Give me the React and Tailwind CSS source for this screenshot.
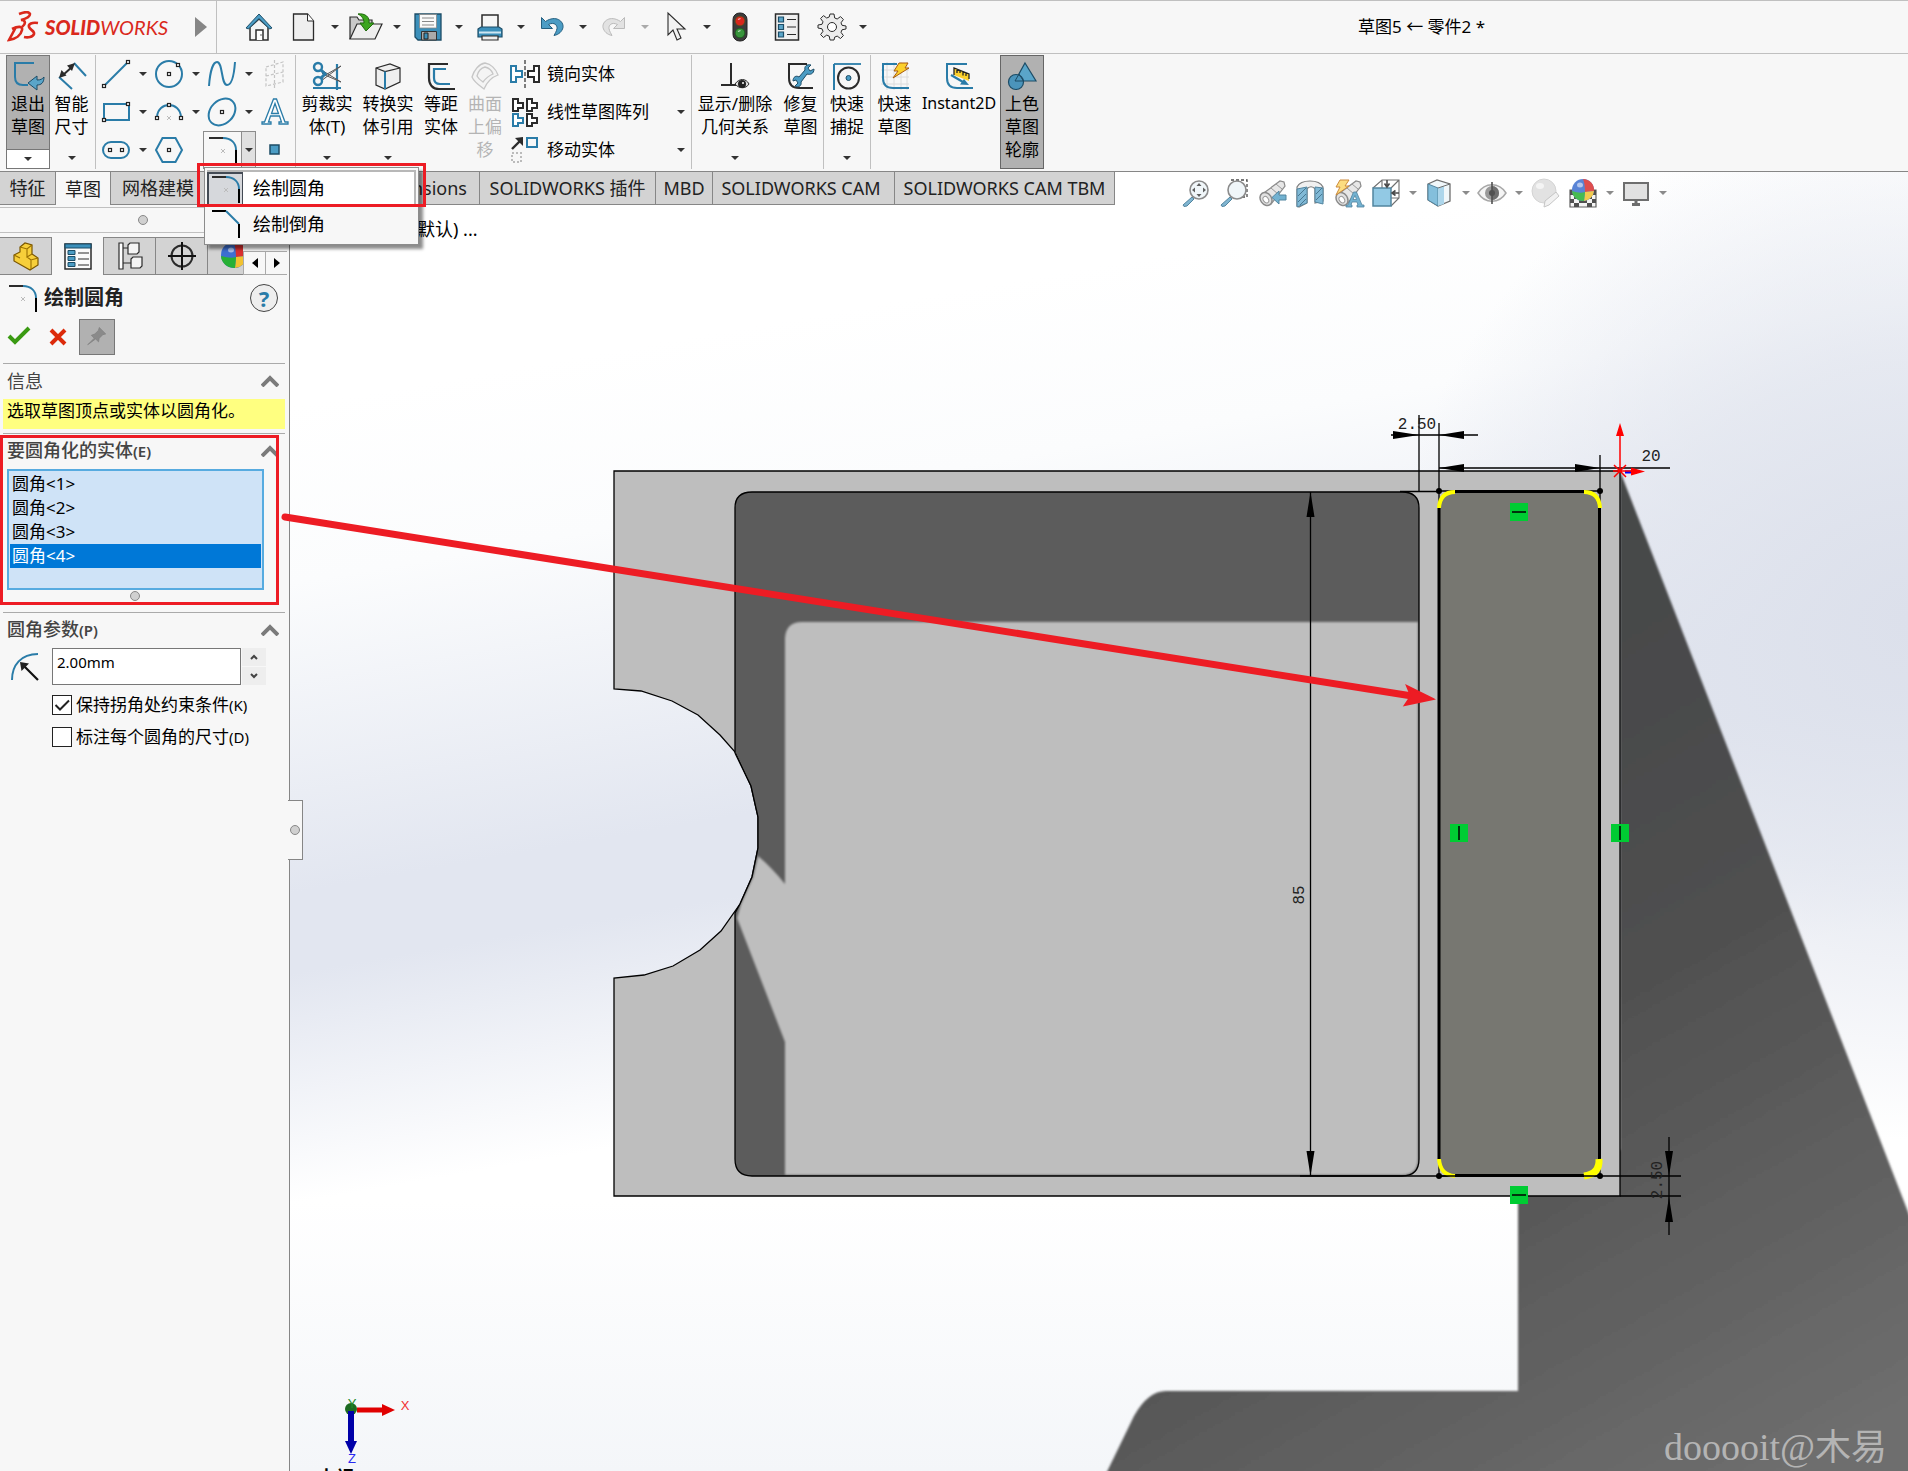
const BLUE = '#2a7ca8'
const DARK = '#2b2b2b'

function Icon({ children, className = 'w-7 h-7' }) {
  return (
    <svg className={`${className} shrink-0 overflow-visible`} viewBox="0 0 28 28" fill="none" stroke={DARK} strokeWidth="1.5" aria-hidden="true">
      {children}
    </svg>
  )
}

function Caret({ className = 'text-[#333]' }) {
  return (
    <svg className={`w-2 h-1 shrink-0 ${className}`} viewBox="0 0 8 4" fill="currentColor" aria-hidden="true">
      <path d="M0 0h8L4 4z" />
    </svg>
  )
}

function Handle({ x, y }) {
  return <rect x={x - 1.5} y={y - 1.5} width="3" height="3" fill="#fff" stroke="#222" strokeWidth="1.2" />
}

const mag = (
  <>
    <path d="M10 18l-9 8 1 1.500 3-.5 7-7z" fill="#6aa9c9" stroke="#35708f" strokeWidth="1" />
    <circle cx="17" cy="11" r="9" fill="#eef5f9" stroke="#777" strokeWidth="1.6" />
  </>
)

const telescope = (
  <>
    <path d="M3 16L22 2l4 1 1 4-14 18z" fill="#e3e3e3" stroke="#777" strokeWidth="1.200" />
    <path d="M13 9l7 6M18 5l6 5" stroke="#888" strokeWidth="1" />
    <ellipse cx="8" cy="20" rx="5.500" ry="7" transform="rotate(-35 8 20)" fill="#ddd" stroke="#777" />
    <ellipse cx="7.500" cy="20.500" rx="2.500" ry="3.500" transform="rotate(-35 8 20)" fill="#fff" stroke="#888" strokeWidth="1" />
  </>
)

const colourBall = (cx, cy, r) => (
  <g stroke="none">
    <circle cx={cx} cy={cy} r={r} fill="#3d6fd0" />
    <path d={`M${cx} ${cy - r}A${r} ${r} 0 0 1 ${cx + r} ${cy + 1}L${cx + 2} ${cy + 2}Q${cx + 2} ${cy - 6} ${cx} ${cy - r}z`} fill="#d93030" />
    <path d={`M${cx + 2} ${cy + 2}L${cx + r} ${cy + 1}A${r} ${r} 0 0 1 ${cx + 1} ${cy + r}z`} fill="#f2c230" />
    <path d={`M${cx - r} ${cy + 1}Q${cx - 3} ${cy + 4} ${cx + 2} ${cy + 2}L${cx + 1} ${cy + r}A${r} ${r} 0 0 1 ${cx - r} ${cy + 1}z`} fill="#27b035" />
    <ellipse cx={cx - 3} cy={cy - 5} rx="3" ry="2.500" fill="#fff" opacity=".55" />
  </g>
)

const profile = (x, y, colour) => (
  <path d="M0 0h5v4h5v5H5v3H0z" transform={`translate(${x} ${y})`} fill="#fff" stroke={colour} strokeWidth="2" />
)

const icons = {
  home: (
    <>
      <path d="M5 14v13h18V14L14 6z" fill="#f4f4f4" />
      <path d="M11 27V17h7v10" fill="#fff" />
      <path d="M15.500 22h1" />
      <path d="M1 15L14 1l13 14-2.500 1L14 5.500 3.500 16z" fill="#4b9cc4" stroke="#1f4f69" strokeWidth="1" />
    </>
  ),
  doc: (
    <>
      <path d="M3.500 1h14l6 7v19h-20z" fill="#efefef" strokeWidth="1.300" />
      <path d="M17.500 1v7h6" fill="#fff" strokeWidth="1" />
    </>
  ),
  open: (
    <>
      <path d="M-2 26V4h7l2 3h13v5" fill="#c9c9c9" strokeWidth="1.200" />
      <path d="M-2 26l7-15h25l-7 15z" fill="#eee" strokeWidth="1.200" />
      <path d="M6 1c7-1 12 3 11 9h5l-8 8-6-8h4c0-4-2-7-6-9z" fill="#3ba51e" stroke="#1f6a0c" strokeWidth="1" />
    </>
  ),
  save: (
    <>
      <path d="M1 1h26v26H4l-3-3z" fill="#3b8fba" stroke="#1c4c66" strokeWidth="1.300" />
      <path d="M5.500 1.500h17V15h-17z" fill="#fafafa" stroke="#888" strokeWidth=".8" />
      <path d="M8 5h12M8 8.500h12M8 12h12" stroke="#888" strokeWidth="1" />
      <path d="M7.500 18.500h15V27h-15z" fill="#aaa" stroke="#333" strokeWidth="1" />
      <path d="M10 20h4v6h-4z" fill="#3b8fba" stroke="#222" strokeWidth="1" />
    </>
  ),
  print: (
    <>
      <path d="M6 2h16v14H6z" fill="#f5f5f5" />
      <path d="M2 16l3-2h18l3 2v8H2z" fill="#3b8fba" stroke="#1c4c66" strokeWidth="1.200" />
      <path d="M3 19.500h22" stroke="#cfe6f2" strokeWidth="2" />
      <path d="M6 23h16v4H6z" fill="#eee" strokeWidth="1.200" />
    </>
  ),
  undo: <path d="M3.500 4.500v11h11l-4-4c6-3 9 1 8.500 4-.5 3-2 5-3 7 5-1 8-4 9-8 1-6-7-13-17.500-6z" fill="#4b9cc4" stroke="#245f80" strokeWidth="1" />,
  redo: <path d="M24.500 4.500v11h-11l4-4c-6-3-9 1-8.500 4 .5 3 2 5 3 7-5-1-8-4-9-8-1-6 7-13 17.500-6z" fill="#e2e2e2" stroke="#bbb" strokeWidth="1" />,
  cursor: <path d="M6 0v22l5-5 4 10 4-2-4-9h8z" fill="#f2f2f2" strokeWidth="1.100" />,
  traffic: (
    <>
      <rect x="7" y="0" width="14" height="28" rx="6.500" fill="#3c3c3c" stroke="#222" strokeWidth="1" />
      <circle cx="14" cy="8" r="4.800" fill="#d8271d" stroke="#551" strokeWidth=".6" />
      <circle cx="14" cy="20" r="4.800" fill="#38943c" stroke="#151" strokeWidth=".6" />
      <path d="M12 6.500l2.500-1M12 18.500l2.500-1" stroke="#fff" strokeWidth="1.200" opacity=".7" />
    </>
  ),
  list: (
    <>
      <path d="M2.500 1h23v26h-23z" fill="#f0f0f0" />
      <path d="M5.500 4h5v5h-5zM5.500 11.500h5v5h-5zM5.500 19h5v5h-5z" fill="#5aa5c9" stroke="#1c4c66" strokeWidth="1.200" />
      <path d="M14 6.500h9M14 14h9M14 21.500h9" strokeWidth="1.200" />
    </>
  ),
  gear: (
    <>
      <path
        d="M12 1h4l.7 4 2.500 1 3.300-2.400 2.900 2.900L23 9.800l1 2.500 4 .7v3l-4 .8-1 2.500 2.400 3.300-2.900 2.900-3.300-2.400-2.500 1L16 27h-4l-.8-3.900-2.500-1-3.200 2.400-2.900-2.900L5 18.300l-1-2.500L0 15v-3l4-.7 1-2.500-2.400-3.300 2.900-2.900L8.700 5l2.500-1z"
        fill="#ececec"
        strokeWidth="1"
      />
      <circle cx="14" cy="14" r="4.500" fill="#fff" strokeWidth="1" />
    </>
  ),
  exit: (
    <>
      <path d="M20 1H1v14c0 5 3 8 8 8h5" stroke={BLUE} strokeWidth="2" />
      <path d="M30 15c0 6-3 8-7 8v5l-9-7 9-7v4c4 0 5-1 7-3z" fill="#5aa5c9" stroke="#1c4c66" strokeWidth="1" />
    </>
  ),
  smart: (
    <>
      <path d="M16 1l12 13M1 15l13 12" stroke={BLUE} strokeWidth="2" />
      <path d="M5 13L14 5" strokeWidth="2" />
      <path d="M1 16l2.500-8 5 5.500zM17 1l-8 2.500 5 5.500z" fill={DARK} stroke="none" />
    </>
  ),
  line: (
    <>
      <path d="M2 26L26 2" stroke={BLUE} strokeWidth="2" />
      <Handle x={2} y={26} />
      <Handle x={26} y={2} />
    </>
  ),
  circle: (
    <>
      <circle cx="14" cy="14" r="13" stroke={BLUE} strokeWidth="2" />
      <Handle x={14} y={14} />
      <Handle x={23} y={5} />
    </>
  ),
  spline: <path d="M1 26C2 12 5 2 9 2c6 0 4 23 10 23 5 0 7-9 8-23" stroke={BLUE} strokeWidth="2" />,
  plane: <path d="M5 7l17-5v20L5 26zM5 16l17-4M13.500 0v28" stroke="#c4c4c4" strokeWidth="1.200" strokeDasharray="3 2" />,
  rect: (
    <>
      <path d="M2 6h25v16H2z" stroke={BLUE} strokeWidth="2" />
      <Handle x={26} y={6} />
      <Handle x={2} y={22} />
    </>
  ),
  arc: (
    <>
      <path d="M2 19C3 3 25 3 26 19" stroke={BLUE} strokeWidth="2" />
      <path d="M12 18l4 4m0-4l-4 4" stroke="#bbb" strokeWidth="1" />
      <Handle x={14} y={7} />
      <Handle x={2} y={20} />
      <Handle x={26} y={20} />
    </>
  ),
  ellipse: (
    <>
      <ellipse cx="14" cy="14" rx="15" ry="11.500" transform="rotate(-45 14 14)" stroke={BLUE} strokeWidth="2" />
      <Handle x={14} y={14} />
    </>
  ),
  text: (
    <path
      d="M1 26v-2h2.500L12.500 1h3l8.500 23h3v2h-9v-2h2.500l-2-6H9.500l-2 6H10v2zM10.500 15.500h7L14 5.500z"
      fill="#fff"
      stroke={BLUE}
      strokeWidth="1.300"
    />
  ),
  slot: (
    <>
      <rect x="1" y="6" width="26" height="16" rx="8" stroke={BLUE} strokeWidth="2" />
      <Handle x={8} y={14} />
      <Handle x={20} y={14} />
    </>
  ),
  hexagon: (
    <>
      <path d="M7.500 2h13L27 14l-6.500 12h-13L1 14z" stroke={BLUE} strokeWidth="2" />
      <Handle x={14} y={14} />
    </>
  ),
  fillet: (
    <>
      <path d="M0 2h14" strokeWidth="2" />
      <path d="M14 2c8 0 13 5 13 12" stroke={BLUE} strokeWidth="2" />
      <path d="M27 14v14" stroke="#000" strokeWidth="2" />
      <path d="M12 13l4 4m0-4l-4 4" stroke="#bbb" strokeWidth="1" />
    </>
  ),
  chamfer: (
    <>
      <path d="M0 1h14" stroke="#000" strokeWidth="2" />
      <path d="M14 1l13 13" stroke={BLUE} strokeWidth="2" />
      <path d="M27 14v14" stroke="#000" strokeWidth="2" />
    </>
  ),
  point: <path d="M9 9h9v9H9z" fill="#4b9cc4" stroke="#1c4c66" />,
  trim: (
    <>
      <path d="M24 2v26M0 26h28" stroke={BLUE} strokeWidth="2.200" />
      <path d="M28 4L9 15l1 2.500zM28 20L10 9l-.5 3z" fill="#eee" stroke="#555" strokeWidth="1" />
      <circle cx="5" cy="5" r="4" stroke={BLUE} strokeWidth="2.400" />
      <circle cx="5" cy="19" r="4" stroke={BLUE} strokeWidth="2.400" />
      <path d="M8 8l4 4-4 4" stroke={BLUE} strokeWidth="3" />
    </>
  ),
  convert: (
    <>
      <path d="M2 6l14-4 10 4v14l-15 7-9-4z" fill="#efefef" strokeWidth="1.200" />
      <path d="M2 6l9 3.500L26 6" strokeWidth="1.200" />
      <path d="M11 9.500V27" stroke={BLUE} strokeWidth="2" />
    </>
  ),
  offset: (
    <>
      <path d="M21 2H2v14c0 7 4 11 10 11h16" strokeWidth="2.200" />
      <path d="M19 7H7v9c0 4 2 6 6 6h10" stroke={BLUE} strokeWidth="2.200" />
    </>
  ),
  surface: (
    <>
      <path d="M13 27C9 24 3 20 1 15 3 8 8 2 14 1c6 1 11 6 13 12-6 2-11 7-14 14z" stroke="#c6c6c6" fill="#f4f4f4" strokeWidth="1.300" />
      <path d="M12 20c-3-2-5-4-6-6 1-4 4-8 8-9 4 1 7 4 8 7-5 2-7 4-10 8z" stroke="#c6c6c6" strokeWidth="1.300" />
    </>
  ),
  mirror: (
    <>
      <path d="M0 6h5v5h6v6H5v5H0z" fill="#fff" stroke={BLUE} strokeWidth="2" />
      <path d="M28 6h-5v5h-6v6h6v5h5z" fill="#fff" strokeWidth="2" />
      <path d="M14 0v28" strokeDasharray="4 2" strokeWidth="1.200" />
    </>
  ),
  pattern: (
    <>
      {profile(2, 1, DARK)}
      {profile(16, 1, DARK)}
      {profile(2, 16, BLUE)}
      {profile(16, 16, DARK)}
    </>
  ),
  move: (
    <>
      <path d="M1 13L9 5" strokeWidth="2.400" />
      <path d="M12 1v9L4 2z" fill={DARK} stroke="none" />
      <path d="M16 2h10v9H16z" stroke={BLUE} strokeWidth="2" />
      <path d="M1 17h9v9H1z" stroke="#bbb" strokeWidth="2" strokeDasharray="2 2" />
    </>
  ),
  relations: (
    <>
      <path d="M10 1v22M0 23h18" strokeWidth="2" />
      <path d="M14 22c4-6 11-6 14 0-3 5-10 5-14 0z" fill="#ddd" strokeWidth="1" />
      <circle cx="21" cy="22" r="4" fill="#222" stroke="none" />
      <circle cx="22" cy="21" r="1" fill="#fff" stroke="none" />
    </>
  ),
  repair: (
    <>
      <path d="M20 2H2v14c0 7 4 10 10 10h14" strokeWidth="2" />
      <path d="M27 7c0 5-4 6-7 5l-6 8c1 4-3 6-6 4l3-3-2-3-3 1c0-4 3-6 6-4l6-7c-1-4 2-6 6-5l-3 3 2 3z" fill="#4b9cc4" stroke="#1c4c66" strokeWidth="1" />
    </>
  ),
  snap: (
    <>
      <path d="M1 28V2" stroke={BLUE} strokeWidth="2" />
      <path d="M1 2h27" strokeWidth="1.800" stroke={BLUE} />
      <circle cx="15.500" cy="16" r="10.500" strokeWidth="2" />
      <circle cx="15.500" cy="16" r="2.500" fill="#4b9cc4" stroke="#1c4c66" strokeWidth="1" />
    </>
  ),
  rapid: (
    <>
      <path d="M0 8h28M0 15h28M0 22h28M6 0v28M13 0v28M20 0v28M26 0v28" stroke="#dcdcdc" strokeWidth="1" />
      <path d="M16 2H2v14c0 7 4 10 10 10h16" stroke={BLUE} strokeWidth="2" />
      <path d="M18 1h9l-3 5h4L12 16l5-7h-4z" fill="#fcd02c" stroke="#a85a10" strokeWidth="1" />
    </>
  ),
  instant: (
    <>
      <path d="M22 2H2v14c0 7 4 10 10 10h16" stroke={BLUE} strokeWidth="2" />
      <path d="M9 6l15 6v7L9 13z" fill="#fcd02c" stroke="none" />
      <path d="M9 13V6l15 6v5M12 7v4M15 8v3M18 9.500v4M21 11v3" stroke="#222" strokeWidth="1.300" />
      <path d="M6 13l12 7" stroke={BLUE} strokeWidth="2.200" />
      <path d="M24 23l-9-.5 4-5.500z" fill={BLUE} stroke="none" />
    </>
  ),
  shaded: (
    <>
      <path d="M17 1l11 18H7z" fill="#5aa5c9" stroke="#1c4c66" strokeWidth="1.200" />
      <circle cx="8" cy="20" r="7.500" fill="#4b94bb" stroke="#1c4c66" strokeWidth="1.200" />
      <path d="M7 19h8.500L11 12z" fill="none" stroke="#1c4c66" strokeWidth="1" />
    </>
  ),
  part: (
    <>
      <path d="M2 13l6-3V5l5-4 7 2v9l6 4v7l-8 5-16-9z" fill="#f7cf3a" stroke="#7a5600" strokeWidth="1.200" />
      <path d="M8 5l7 2 5-4M15 7v8l5-3M15 15l4 3 7-2M19 18v9M2 13l6 3" stroke="#9a7000" strokeWidth="1.100" />
    </>
  ),
  props: (
    <>
      <path d="M1 2h26v25H1z" fill="#fafafa" />
      <path d="M1 2h26v4H1z" fill="#3b8fba" stroke="#1c4c66" strokeWidth="1.200" />
      <path d="M4 8.500h7v4H4zM4 14.500h7v4H4zM4 20.500h7v4H4z" fill="#4b9cc4" stroke="#1c4c66" strokeWidth="1" />
      <path d="M14 11h11M14 17h11M14 23h11" strokeWidth="1.200" />
    </>
  ),
  config: (
    <>
      <path d="M3 1h4v26H3zM7 6h8M7 21h8" fill="#fff" strokeWidth="1.200" />
      <path d="M12 3l2-2h9v9l-2 2h-9zM15 17l2-2h9v9l-2 2h-9z" fill="#f4f4f4" strokeWidth="1.200" />
    </>
  ),
  target: (
    <>
      <circle cx="14" cy="14" r="10.500" strokeWidth="2" />
      <path d="M14 0v28M0 14h28" stroke="#111" strokeWidth="2" />
    </>
  ),
  ball: colourBall(14, 13, 13),
  zoomFit: (
    <>
      {mag}
      <path d="M17 4l2.500 3h-5zM17 18l2.500-3h-5zM10 11l3-2.500v5zM24 11l-3-2.500v5z" fill="#444" stroke="none" />
    </>
  ),
  zoomArea: (
    <>
      <path d="M11 1h16v17h-6" strokeDasharray="3 2" strokeWidth="1.300" />
      {mag}
    </>
  ),
  prevView: (
    <>
      {telescope}
      <path d="M28 16h-7v-4l-7 6.500 7 6.500v-4h7z" fill="#5aa5c9" stroke="#35708f" strokeWidth="1" />
    </>
  ),
  section: (
    <>
      <path d="M1 8c4-8 22-8 26 0v14l-8 2V10c-2-3-6-3-8 0v14l-8 4-2-1z" fill="#eee" stroke="#666" strokeWidth="1.200" />
      <path d="M1 10l10-2v16l-10 4zM19 8l8 1v16l-8-2z" fill="#6aadd0" stroke="#35708f" strokeWidth="1" />
      <path d="M2 17l8-8M2 23l8-8M4 26l6-6M20 15l6-6M20 21l6-6" stroke="#28607f" strokeWidth="1" />
    </>
  ),
  annotate: (
    <>
      {telescope}
      <path d="M6 1h9l-4 6h4L2 16l4-8H2z" fill="#fcd86a" stroke="#c4761a" strokeWidth="1" />
      <path d="M12 28v-2h2l5.500-13h3L28 26h2v2h-7v-2h1l-1-3h-5l-1 3h1v2zM19 20.500h3.500L21 16.500z" fill="#5aa5c9" stroke="#35708f" strokeWidth=".8" />
    </>
  ),
  orient: (
    <>
      <path d="M1 9l9-8h17v18l-8 8M19 9l8-8M10 1v8M19 19h8" strokeWidth="1.100" stroke="#555" />
      <path d="M1 9h18v18H1z" fill="#7fc0e0" stroke="#35708f" />
      <path d="M15 1v6m-2.500-2.500L15 8l2.500-3.500M27 14h-6m2.500-2.500L20 14l3.500 2.500" strokeWidth="1.600" />
    </>
  ),
  display: (
    <>
      <path d="M3 5l9-4 13 4v17l-12 5-10-6z" fill="#eef6fa" stroke="#555" strokeWidth="1.300" />
      <path d="M3 5l10 4v18L3 21z" fill="#6fb4d6" stroke="#35708f" strokeWidth="1" />
      <path d="M13 9l6-2v18l-6 2z" fill="#9fd0e8" stroke="none" />
      <path d="M13 9l12-4" stroke="#555" strokeWidth="1" />
    </>
  ),
  eye: (
    <>
      <path d="M0 14C7 3 21 3 28 14 21 25 7 25 0 14z" fill="#f4f4f4" stroke="#999" />
      <circle cx="14" cy="14" r="7" fill="#888" stroke="none" />
      <path d="M14 7a7 7 0 0 1 0 14z" fill="#555" stroke="none" />
      <circle cx="14" cy="14" r="3" fill="#333" stroke="none" />
      <path d="M14 3v22" stroke="#333" strokeWidth="1.600" />
    </>
  ),
  appearance: (
    <>
      <circle cx="13" cy="12" r="12" fill="#dedede" stroke="#ccc" strokeWidth="1" />
      <ellipse cx="9" cy="7" rx="4" ry="3" fill="#f3f3f3" stroke="none" />
      <path d="M13 28l1-6 11-9 3 4-10 9z" fill="#efefef" stroke="#bbb" strokeWidth="1" />
    </>
  ),
  scene: (
    <>
      <path d="M1 11h26v17H1z" fill="#f4f4f4" stroke="#444" strokeWidth="1.200" />
      <path d="M1 11h4v5H1zM23 11h4v5h-4zM5 16h5v4H5zM18 16h5v4h-5zM1 20h4v4H1zM10 20h8v4h-8zM23 20h4v4h-4zM5 24h5v4H5zM18 24h5v4h-5z" fill="#333" stroke="none" />
      {colourBall(14, 11, 11)}
    </>
  ),
  monitor: (
    <>
      <path d="M2 4h24v17H2z" fill="#ddd" stroke="#555" strokeWidth="2" />
      <path d="M10 25.500h8M14 21v4" stroke="#555" strokeWidth="3" />
    </>
  ),
  radius: (
    <>
      <path d="M1 27C1 12 10 1 27 1" stroke={BLUE} strokeWidth="2" />
      <path d="M27 27L13 13" stroke="#111" strokeWidth="2.200" />
      <path d="M9 9l9 1.500L10.500 18z" fill="#222" stroke="none" />
    </>
  ),
  pin: <path d="M1 26l9-9-4-4 5-2 5-5 1-4 9 9-4 1-5 5-1 5-4-4z" transform="translate(4 3) scale(.72)" fill="#8a8a8a" stroke="#808080" strokeWidth="1" />,
}

const quickTools = [
  { name: 'home', label: '主页', className: 'mr-[13px]' },
  { name: 'doc', label: '新建', menu: true },
  { name: 'open', label: '打开', menu: true },
  { name: 'save', label: '保存', menu: true },
  { name: 'print', label: '打印', menu: true },
  { name: 'undo', label: '撤消', menu: true },
  { name: 'redo', label: '重做', menu: true, muted: true },
  { name: 'cursor', label: '选择', menu: true },
  { name: 'traffic', label: '重建模型', className: 'mr-[15px] ml-0.5' },
  { name: 'list', label: '文件属性', className: 'mr-[13px]' },
  { name: 'gear', label: '选项', menu: true },
]

const sketchTools = [
  ['line', '直线', true], ['circle', '圆', true], ['spline', '样条曲线', true], ['plane', '基准面', false],
  ['rect', '矩形', true], ['arc', '圆弧', true], ['ellipse', '椭圆', true], ['text', '文字', false],
  ['slot', '槽口', true], ['hexagon', '多边形', false], ['fillet', '绘制圆角', true], ['point', '点', false],
]

const viewTools = [
  ['zoomFit', '整屏显示全图'], ['zoomArea', '局部放大'], ['prevView', '上一视图'], ['section', '剖面视图'],
  ['annotate', '动态注解视图'], ['orient', '视图定向', true], ['display', '显示样式', true], ['eye', '隐藏/显示项目', true],
  ['appearance', '编辑外观'], ['scene', '应用布景', true], ['monitor', '视图设定', true],
]

function TitleBar() {
  return (
    <header className="flex items-center h-[54px] border-y border-[#c0c0c0]">
      <svg className="w-8 h-8 ml-[7px] shrink-0" viewBox="0 0 32 32" fill="none" stroke="#da291c" strokeWidth="2.600" aria-hidden="true">
        <path d="M12 3c5-2 10-3 11 0 0 3-5 5-9 6 5 0 5 4 1 7" />
        <path d="M5 18c6-3 11-3 10 1-1 5-6 9-13 10l7-13" />
        <path d="M31 12c-6-1-10 1-9 4 1 3 6 4 5 7s-6 4-10 3" />
      </svg>
      <div className="w-[125px] ml-1.5 font-['Lato',sans-serif] text-[20px] leading-6 italic text-[#da291c]">
        <span className="font-black">SOLID</span>WORKS
      </div>
      <button aria-label="展开菜单" className="ml-[25px]">
        <svg className="w-3 h-5" viewBox="0 0 12 20" fill="#868686"><path d="M0 0l12 10L0 20z" /></svg>
      </button>
      <div className="w-px self-stretch bg-[#c0c0c0] ml-[9px] mr-[26px]" />
      <div className="flex items-center">
        {quickTools.map((tool) => (
          <div key={tool.name} className={`flex items-center ${tool.className || ''}`}>
            <button aria-label={tool.label} className="flex justify-center w-8"><Icon>{icons[tool.name]}</Icon></button>
            {tool.menu && (
              <button aria-label={`${tool.label} 选项`} className="flex justify-center items-center w-[30px] h-7">
                <Caret className={tool.muted ? 'text-[#aaa]' : 'text-[#333]'} />
              </button>
            )}
          </div>
        ))}
      </div>
      <h1 className="ml-[480px] text-[17px] leading-6 whitespace-nowrap">草图5 ← 零件2 *</h1>
    </header>
  )
}

function BigTool({ icon, lines, width, menu, className = '', size = 'text-[17px]' }) {
  return (
    <button className={`flex flex-col items-center pt-1.5 h-[114px] shrink-0 ${width} ${className}`}>
      <span className="h-[31px] pt-px"><Icon>{icons[icon]}</Icon></span>
      {lines.map((line) => (
        <span key={line} className={`leading-[23px] whitespace-nowrap ${size}`}>{line}</span>
      ))}
      {menu && <span className="flex items-center h-[22px] mt-auto"><Caret /></span>}
    </button>
  )
}

function Divider({ className = '' }) {
  return <div className={`w-px h-[114px] bg-[#c0c0c0] shrink-0 ${className}`} />
}

function FilletMenu() {
  return (
    <div role="menu" className="absolute left-0 top-[35px] z-20 w-[215px] h-[78px] p-0.5 bg-[#f7f7f7] border border-[#8c8c8c] shadow-[4px_4px_3px_rgba(0,0,0,0.45)]">
      <button role="menuitem" className="flex items-center w-full h-9 bg-white border-2 border-l-0 border-[#b8b8b8]">
        <span className="flex items-center justify-center w-9 h-8 bg-[#d6d8dc] border-2 border-r border-b-0 border-[#444b55]"><Icon>{icons.fillet}</Icon></span>
        <span className="ml-2.5 text-[18px] leading-6">绘制圆角</span>
      </button>
      <button role="menuitem" className="flex items-center w-full h-9 pl-[5px]">
        <Icon>{icons.chamfer}</Icon>
        <span className="ml-[13px] text-[18px] leading-6">绘制倒角</span>
      </button>
      <div className="absolute -left-2 -top-[5px] w-[229px] h-[44px] border-3 border-[#ed1c24] pointer-events-none" />
    </div>
  )
}

function SketchTool({ name, label, menu }) {
  const open = name === 'fillet'
  return (
    <div className={`relative flex items-center h-[38px] ${open ? 'border border-[#8c8c8c] -ml-[3px] w-[53px]' : ''}`}>
      <button aria-label={label} className={`flex justify-center ${open ? 'w-[37px]' : 'w-8'}`}><Icon>{icons[name]}</Icon></button>
      {menu && (
        <button aria-label={`${label} 选项`} className={`flex justify-center items-center ${open ? 'w-3.5 h-full bg-[#e0e0e0] border-l border-[#8c8c8c]' : 'w-[21px] h-7'}`}>
          <Caret />
        </button>
      )}
      {open && <FilletMenu />}
    </div>
  )
}

function SideTool({ icon, label, menu }) {
  return (
    <div className="flex items-center h-[38px]">
      <button className="flex items-center">
        <Icon>{icons[icon]}</Icon>
        <span className="ml-2 text-[17px] leading-6 whitespace-nowrap">{label}</span>
      </button>
      {menu && <button aria-label={`${label} 选项`} className="flex items-center justify-center w-5 h-7 ml-auto"><Caret /></button>}
    </div>
  )
}

function Ribbon() {
  return (
    <div className="flex items-start pt-px pb-0.5 pl-1.5 border-b border-[#868686]">
      <button className="flex flex-col items-center w-11 h-[114px] border border-[#777] bg-[#b1b1b1] shrink-0">
        <span className="h-[36px] pt-1.5"><Icon>{icons.exit}</Icon></span>
        <span className="text-[17px] leading-[23px]">退出</span>
        <span className="text-[17px] leading-[23px]">草图</span>
        <span className="flex items-center justify-center w-full mt-auto h-[19px] bg-white border-t border-[#777]"><Caret /></span>
      </button>
      <BigTool icon="smart" lines={['智能', '尺寸']} width="w-[43px]" menu />
      <Divider className="ml-0.5 mr-1" />
      <div className="grid grid-cols-[53px_53px_53px_36px] shrink-0">
        {sketchTools.map(([name, label, menu]) => <SketchTool key={name} name={name} label={label} menu={menu} />)}
      </div>
      <Divider className="mr-1" />
      <BigTool icon="trim" lines={['剪裁实', '体(T)']} width="w-[54px]" menu />
      <BigTool icon="convert" lines={['转换实', '体引用']} width="w-[68px]" menu />
      <BigTool icon="offset" lines={['等距', '实体']} width="w-[38px]" />
      <BigTool icon="surface" lines={['曲面', '上偏', '移']} width="w-[50px]" className="text-[#b4b4b4]" />
      <div className="flex flex-col w-[181px] pl-px shrink-0">
        <SideTool icon="mirror" label="镜向实体" />
        <SideTool icon="pattern" label="线性草图阵列" menu />
        <SideTool icon="move" label="移动实体" menu />
      </div>
      <Divider />
      <BigTool icon="relations" lines={['显示/删除', '几何关系']} width="w-[86px]" menu />
      <BigTool icon="repair" lines={['修复', '草图']} width="w-[45px]" />
      <Divider />
      <BigTool icon="snap" lines={['快速', '捕捉']} width="w-[46px]" menu />
      <Divider />
      <BigTool icon="rapid" lines={['快速', '草图']} width="w-[47px]" />
      <BigTool icon="instant" lines={['Instant2D']} width="w-[82px]" size="text-[16px]" />
      <BigTool icon="shaded" lines={['上色', '草图', '轮廓']} width="w-11" className="bg-[#b1b1b1] outline outline-[#666] -outline-offset-1" />
    </div>
  )
}

const tabs = [
  ['特征', 'w-14'],
  ['草图', 'w-[55px]'],
  ['网格建模', 'w-[104px] text-left pl-[11px]'],
  ['Dimensions', 'w-[265px] text-right pr-[12px]'],
  ['SOLIDWORKS 插件', 'w-[176px]'],
  ['MBD', 'w-[57px]'],
  ['SOLIDWORKS CAM', 'w-[182px] pr-[5px]'],
  ['SOLIDWORKS CAM TBM', 'w-[220px]'],
]

function TabRow() {
  return (
    <div className="col-span-2 col-start-1 row-start-1 z-[1] flex items-start">
      <nav className="flex">
        {tabs.map(([label, style]) => (
          <button
            key={label}
            className={`h-[33px] shrink-0 border-r border-[#868686] text-[18px] leading-6 whitespace-nowrap text-[#222] ${style} ${label === '草图' ? 'bg-[#f7f7f7]' : 'bg-[#d3d3d3] border-b'}`}
          >
            {label}
          </button>
        ))}
      </nav>
      <div className="flex items-center ml-[62px] pt-[7px]">
        {viewTools.map(([name, label, menu]) => (
          <div key={name} className="flex items-center opacity-85">
            <button aria-label={label} className="flex justify-center w-[38px]"><Icon>{icons[name]}</Icon></button>
            {menu && <button aria-label={`${label} 选项`} className="flex justify-center w-[15px]"><Caret className="text-[#777]" /></button>}
          </div>
        ))}
      </div>
    </div>
  )
}

function Grip({ className = '' }) {
  return <span className={`block w-2.5 h-2.5 rounded-full border border-[#888] bg-[#d0d0d0] ${className}`} />
}

function SectionHead({ title, hotkey }) {
  return (
    <button className={`flex items-center justify-between w-full h-[35px] pl-1 pr-1.5 pb-0.5 text-[18px] leading-6 text-[#444] ${hotkey ? 'font-medium' : ''}`}>
      <span>{title}{hotkey && <span className="text-[15px] font-semibold">{hotkey}</span>}</span>
      <svg className="w-[18px] h-3" viewBox="0 0 18 12" fill="none" stroke="#7b7b7b" strokeWidth="4"><path d="M1 11l8-8 8 8" /></svg>
    </button>
  )
}

function CheckRow({ label, hotkey, checked }) {
  return (
    <label className="flex items-center h-8 ml-[49px] first-of-type:mt-1 whitespace-nowrap text-[17px] leading-6">
      <span className="grid shrink-0">
        <input type="checkbox" defaultChecked={checked} className="peer col-start-1 row-start-1 appearance-none w-5 h-5 border border-[#222] bg-white" />
        <svg className="col-start-1 row-start-1 w-5 h-5 pointer-events-none opacity-0 peer-checked:opacity-100" viewBox="0 0 20 20" fill="none" stroke="#222" strokeWidth="2"><path d="M3.500 10l4.500 4.500L17 5.500" /></svg>
      </span>
      <span className="ml-1">{label}<span className="text-[15px]">{hotkey}</span></span>
    </label>
  )
}

function PropertyPanel() {
  const panelTabs = ['part', 'props', 'config', 'target']
  const names = ['特征树', '属性', '配置', '尺寸']
  return (
    <aside className="relative col-start-1 row-start-2 z-[1] bg-[#f7f7f7] border-r border-[#868686]">
      <div className="flex justify-center items-center h-[26px] mt-0.5 pr-1 border-y border-[#c0c0c0]"><Grip /></div>
      <div className="flex h-[38px] mt-1">
        {panelTabs.map((name, i) => (
          <button
            key={name}
            aria-label={names[i]}
            className={`flex items-center justify-center w-13 h-[38px] shrink-0 border-r border-[#868686] ${name === 'props' ? '' : 'bg-[#d3d3d3] border-y'}`}
          >
            <Icon>{icons[name]}</Icon>
          </button>
        ))}
        <button aria-label="外观" className="flex items-center w-[35px] h-[38px] pl-3 overflow-hidden bg-[#d3d3d3] border-y border-[#868686]"><Icon>{icons.ball}</Icon></button>
        <div className="flex self-end flex-1 mr-0.5 h-6 border border-r-0 border-[#aaa]">
          <button aria-label="向左" className="flex-1 flex items-center justify-center border-r border-[#aaa]">
            <svg className="w-1.5 h-2.5" viewBox="0 0 6 10"><path d="M6 0v10L0 5z" /></svg>
          </button>
          <button aria-label="向右" className="flex-1 flex items-center justify-center">
            <svg className="w-1.5 h-2.5" viewBox="0 0 6 10"><path d="M0 0v10l6-5z" /></svg>
          </button>
        </div>
      </div>

      <div className="flex items-center h-[45px] pl-[9px] pr-[11px] text-[#222]">
        <Icon>{icons.fillet}</Icon>
        <h2 className="ml-[7px] text-[20px] leading-6 font-bold">绘制圆角</h2>
        <button aria-label="帮助" className="ml-auto flex items-center justify-center w-7 h-7 rounded-full border border-[#444] bg-[#eee] text-[22px] leading-6 font-bold text-[#2a7ca8]">?</button>
      </div>
      <div className="flex items-start h-[36px] pl-[7px]">
        <button aria-label="确定" className="mt-1.5"><svg className="w-6 h-5" viewBox="0 0 24 20" fill="none" stroke="#3a9a12" strokeWidth="4"><path d="M2 10l6 6L22 2" /></svg></button>
        <button aria-label="取消" className="ml-[18px] mt-2"><svg className="w-[18px] h-[18px]" viewBox="0 0 18 18" fill="none" stroke="#dc2a0a" strokeWidth="4"><path d="M2 2l14 14M16 2L2 16" /></svg></button>
        <button aria-label="保持可见" className="flex items-center justify-center ml-3 w-9 h-9 -mt-px border border-[#777] bg-[#b1b1b1]"><Icon>{icons.pin}</Icon></button>
      </div>

      <section className="mt-[7px] ml-[3px] mr-1 border-t border-[#aaa]">
        <SectionHead title="信息" />
        <p className="h-[30px] pl-1 bg-[#ffff80] text-[17px] leading-[23px] whitespace-nowrap">选取草图顶点或实体以圆角化。</p>
      </section>

      <section className="relative mt-1 ml-[3px] mr-1 border-t border-[#aaa]">
        <SectionHead title="要圆角化的实体" hotkey="(E)" />
        <ul role="listbox" aria-label="要圆角化的实体" className="ml-1 w-[257px] h-[121px] border-2 border-[#57abe0] bg-[#cfe3f7] p-px text-[17px] leading-[23px]">
          {[1, 2, 3, 4].map((n) => (
            <li key={n} role="option" aria-selected={n === 4} className={`h-6 pl-0.5 ${n === 4 ? 'bg-[#0078d7] text-white' : ''}`}>
              圆角&lt;{n}&gt;
            </li>
          ))}
        </ul>
        <Grip className="mt-px mb-[11px] ml-[127px]" />
        <div className="absolute -left-[3px] top-px w-[279px] h-[170px] border-3 border-[#ed1c24] pointer-events-none" />
      </section>

      <section className="ml-[3px] mr-1 border-t border-[#aaa]">
        <SectionHead title="圆角参数" hotkey="(P)" />
        <div className="flex items-center pl-2">
          <Icon>{icons.radius}</Icon>
          <input aria-label="圆角半径" defaultValue="2.00mm" className="ml-[13px] w-[189px] h-[37px] px-1 pb-2.5 border border-[#777] bg-white text-[15px] leading-6" />
          <div className="flex flex-col ml-px w-6">
            <button aria-label="增大" className="flex items-center justify-center h-[18px] bg-[#eee]"><svg className="w-2 h-1.5" viewBox="0 0 8 6" fill="none" stroke="#444" strokeWidth="2"><path d="M1 5l3-3 3 3" /></svg></button>
            <button aria-label="减小" className="flex items-center justify-center h-[18px] mt-px bg-[#eee]"><svg className="w-2 h-1.5" viewBox="0 0 8 6" fill="none" stroke="#444" strokeWidth="2"><path d="M1 1l3 3 3-3" /></svg></button>
          </div>
        </div>
        <CheckRow label="保持拐角处约束条件" hotkey="(K)" checked />
        <CheckRow label="标注每个圆角的尺寸" hotkey="(D)" />
      </section>

      <button aria-label="折叠面板" className="absolute -right-[14px] top-[595px] flex items-center justify-center w-[15px] h-[60px] bg-[#f7f7f7] border border-l-0 border-[#868686]"><Grip /></button>
    </aside>
  )
}

function Relation({ x, y, vertical }) {
  return (
    <g>
      <rect x={x - 9} y={y - 9} width="18" height="18" fill="#00cc33" />
      <path d={vertical ? `M${x} ${y - 7}v14` : `M${x - 7} ${y}h14`} stroke="#000" strokeWidth="1.500" />
    </g>
  )
}

function Viewport() {
  return (
    <svg className="col-span-2 col-start-1 row-span-2 row-start-1 w-full h-full" viewBox="0 172 1908 1299" preserveAspectRatio="xMinYMin slice" role="img" aria-label="模型视图">
      <defs>
        <linearGradient id="sky" gradientUnits="userSpaceOnUse" x1="900" y1="300" x2="1050" y2="1160">
          <stop offset="0" stopColor="#ffffff" />
          <stop offset=".2" stopColor="#fbfcfd" />
          <stop offset=".55" stopColor="#e2e6f0" />
          <stop offset=".64" stopColor="#e2e6f0" />
          <stop offset=".9" stopColor="#ffffff" />
        </linearGradient>
        <radialGradient id="corner" gradientUnits="userSpaceOnUse" cx="1908" cy="620" r="520">
          <stop offset="0" stopColor="#dce0eb" />
          <stop offset=".5" stopColor="#dfe3ed" stopOpacity=".7" />
          <stop offset="1" stopColor="#dce0eb" stopOpacity="0" />
        </radialGradient>
        <linearGradient id="low" x1="0" y1="0" x2="0" y2="1">
          <stop offset="0" stopColor="#f4f6f9" stopOpacity="0" />
          <stop offset="1" stopColor="#f4f6f9" />
        </linearGradient>
        <linearGradient id="shade" gradientUnits="userSpaceOnUse" x1="1500" y1="680" x2="1908" y2="1400">
          <stop offset="0" stopColor="#47484a" />
          <stop offset=".4" stopColor="#505050" />
          <stop offset="1" stopColor="#6e6e6e" />
        </linearGradient>
        <filter id="soft"><feGaussianBlur stdDeviation="1" /></filter>
      </defs>
      <rect y="172" width="1908" height="1299" fill="url(#sky)" />
      <rect y="172" width="1908" height="1299" fill="url(#corner)" />
      <rect y="1200" width="1520" height="271" fill="url(#low)" />

      <path d="M1620 471L1912 1222V1480H1103L1134 1416Q1148 1391 1166 1391H1518V1150H1620z" fill="url(#shade)" filter="url(#soft)" />

      <path
        d="M614 471H1620V1196H614V978L644 975 673 966 700 950 721 931 740 904 752 877 758 848V817L751 786 736 753 720 735 698 715 672 701 641 691 614 689z"
        fill="#bebebe"
        stroke="#000"
        strokeWidth="1.300"
      />
      <path d="M735 753V508Q735 492 752 492H1402Q1419 492 1419 508V1159Q1419 1176 1402 1176H752Q735 1176 735 1159V913L740 904 752 877 758 848V817L751 786 736 753" fill="#5c5c5c" />
      <path
        d="M785 1175V1042L737 918 741 904 753 877 758 856Q772 868 785 884V638Q786 622 802 622H1418V1159Q1418 1175 1402 1175z"
        fill="#bebebe"
        filter="url(#soft)"
      />
      <path
        d="M735 753V508Q735 492 752 492H1402Q1419 492 1419 508V1159Q1419 1176 1402 1176H752Q735 1176 735 1159V913L740 904 752 877 758 848V817L751 786 735 753"
        fill="none"
        stroke="#000"
        strokeWidth="1.300"
      />

      <rect x="1439" y="491" width="161" height="685" rx="15" fill="#777771" />
      <path d="M1455 491.500H1584M1455 1175.500H1584M1439 507V1160M1599.500 507V1160" stroke="#000" strokeWidth="3" />
      <path d="M1439 491v16M1600 491v16M1439 1160v16M1600 1160v16M1439 491h16M1584 491h16M1439 1176h16M1584 1176h16" stroke="#000" strokeWidth="1.300" />
      <g fill="#000">
        <circle cx="1439" cy="491" r="3" />
        <circle cx="1600" cy="491" r="3" />
        <circle cx="1439" cy="1176" r="3" />
        <circle cx="1600" cy="1176" r="3" />
      </g>
      <g stroke="#ffff00" strokeWidth="4" fill="none">
        <path d="M1439 508Q1440 492 1455 492M1584 492Q1599 492 1600 508M1439 1159Q1440 1175 1455 1176" />
        <path d="M1599 1159Q1600 1174 1584 1176" strokeWidth="7" />
      </g>

      {/* dimensions */}
      <g stroke="#000" strokeWidth="1.300" fill="none">
        <path d="M1391 435H1478M1419 415V492M1439 423V491M1439 468H1670M1600 455V491M1400 491.500H1439" />
        <path d="M1310.500 492V1176M1300 1176H1681M1620 1196H1681M1669 1137V1235" />
      </g>
      <path
        d="M1419 435l-26-4v8zM1439 435l25-4v8zM1439 468l25-4v8zM1600 468l-25-4v8zM1310.500 492l-4 25h8zM1310.500 1176l-4-25h8zM1669 1176l-4-25h8zM1669 1197l-4 25h8z"
        fill="#000"
      />
      <g className="font-['Liberation_Mono',monospace] text-[16px]" fill="#222" textAnchor="middle">
        <text x="1417" y="429">2.50</text>
        <text x="1651" y="461">20</text>
        <text transform="translate(1304 895) rotate(-90)">85</text>
        <text transform="translate(1662 1180) rotate(-90)">2.50</text>
      </g>

      <Relation x={1519} y={512} />
      <Relation x={1459} y={833} vertical />
      <Relation x={1620} y={833} vertical />
      <Relation x={1519} y={1195} />

      <g stroke="#f00" strokeWidth="1.500">
        <path d="M1625 472h12" stroke="#00f" strokeWidth="3" />
        <path d="M1620 471V430M1620 471H1635M1614 465l12 12M1626 465l-12 12M1613 471h14" />
        <path d="M1620 423l-4 13h8zM1645 471.500l-14-4v8z" fill="#f00" strokeWidth="0" />
      </g>

      {/* triad */}
      <circle cx="351" cy="1409" r="6" fill="#1c6a20" />
      <path d="M357 1410h25" stroke="#e00000" strokeWidth="5" />
      <path d="M395 1410l-13-6v12z" fill="#e00000" />
      <path d="M351 1411v31" stroke="#0000a8" strokeWidth="6" />
      <path d="M351 1454l-6-13h12z" fill="#0000a8" />
      <g className="font-['Liberation_Sans',sans-serif] text-[13px]" textAnchor="middle">
        <text x="405" y="1410" fill="#f03030">X</text>
        <text x="352" y="1463" fill="#2a2af0">Z</text>
        <text x="352" y="1408" fill="#1c8a28">Y</text>
      </g>
      <text x="318" y="1484" className="text-[18px] font-bold" fill="#000">上视</text>
      <text x="1664" y="1460" fill="#b4b4b4" className="font-['Liberation_Serif','Noto_Sans_CJK_SC',serif] text-[38px]">
        dooooit@<tspan className="text-[36px]">木易</tspan>
      </text>
    </svg>
  )
}

function CalloutArrow() {
  return (
    <svg className="col-span-2 col-start-1 row-span-2 row-start-1 z-[2] w-full h-full pointer-events-none" viewBox="0 172 1908 1299" preserveAspectRatio="xMinYMin slice" aria-hidden="true">
      <path d="M285 517L1412 696" stroke="#ed1c24" strokeWidth="7" strokeLinecap="round" />
      <path d="M1433 699l-26-13 4 10-6 9z" fill="#ed1c24" stroke="#ed1c24" strokeWidth="2" />
    </svg>
  )
}

export default function App() {
  return (
    <div className="flex flex-col min-h-screen overflow-hidden bg-[#f7f7f7] text-black font-['Noto_Sans','Noto_Sans_CJK_SC',sans-serif]">
      <TitleBar />
      <Ribbon />
      <main className="grid flex-1 grid-cols-[290px_1fr] grid-rows-[33px_1fr]">
        <Viewport />
        <TabRow />
        <PropertyPanel />
        <div className="col-start-2 row-start-2 z-[1] self-start pt-3 pl-[127px] text-[18px] leading-6">默认) ...</div>
        <CalloutArrow />
      </main>
    </div>
  )
}
